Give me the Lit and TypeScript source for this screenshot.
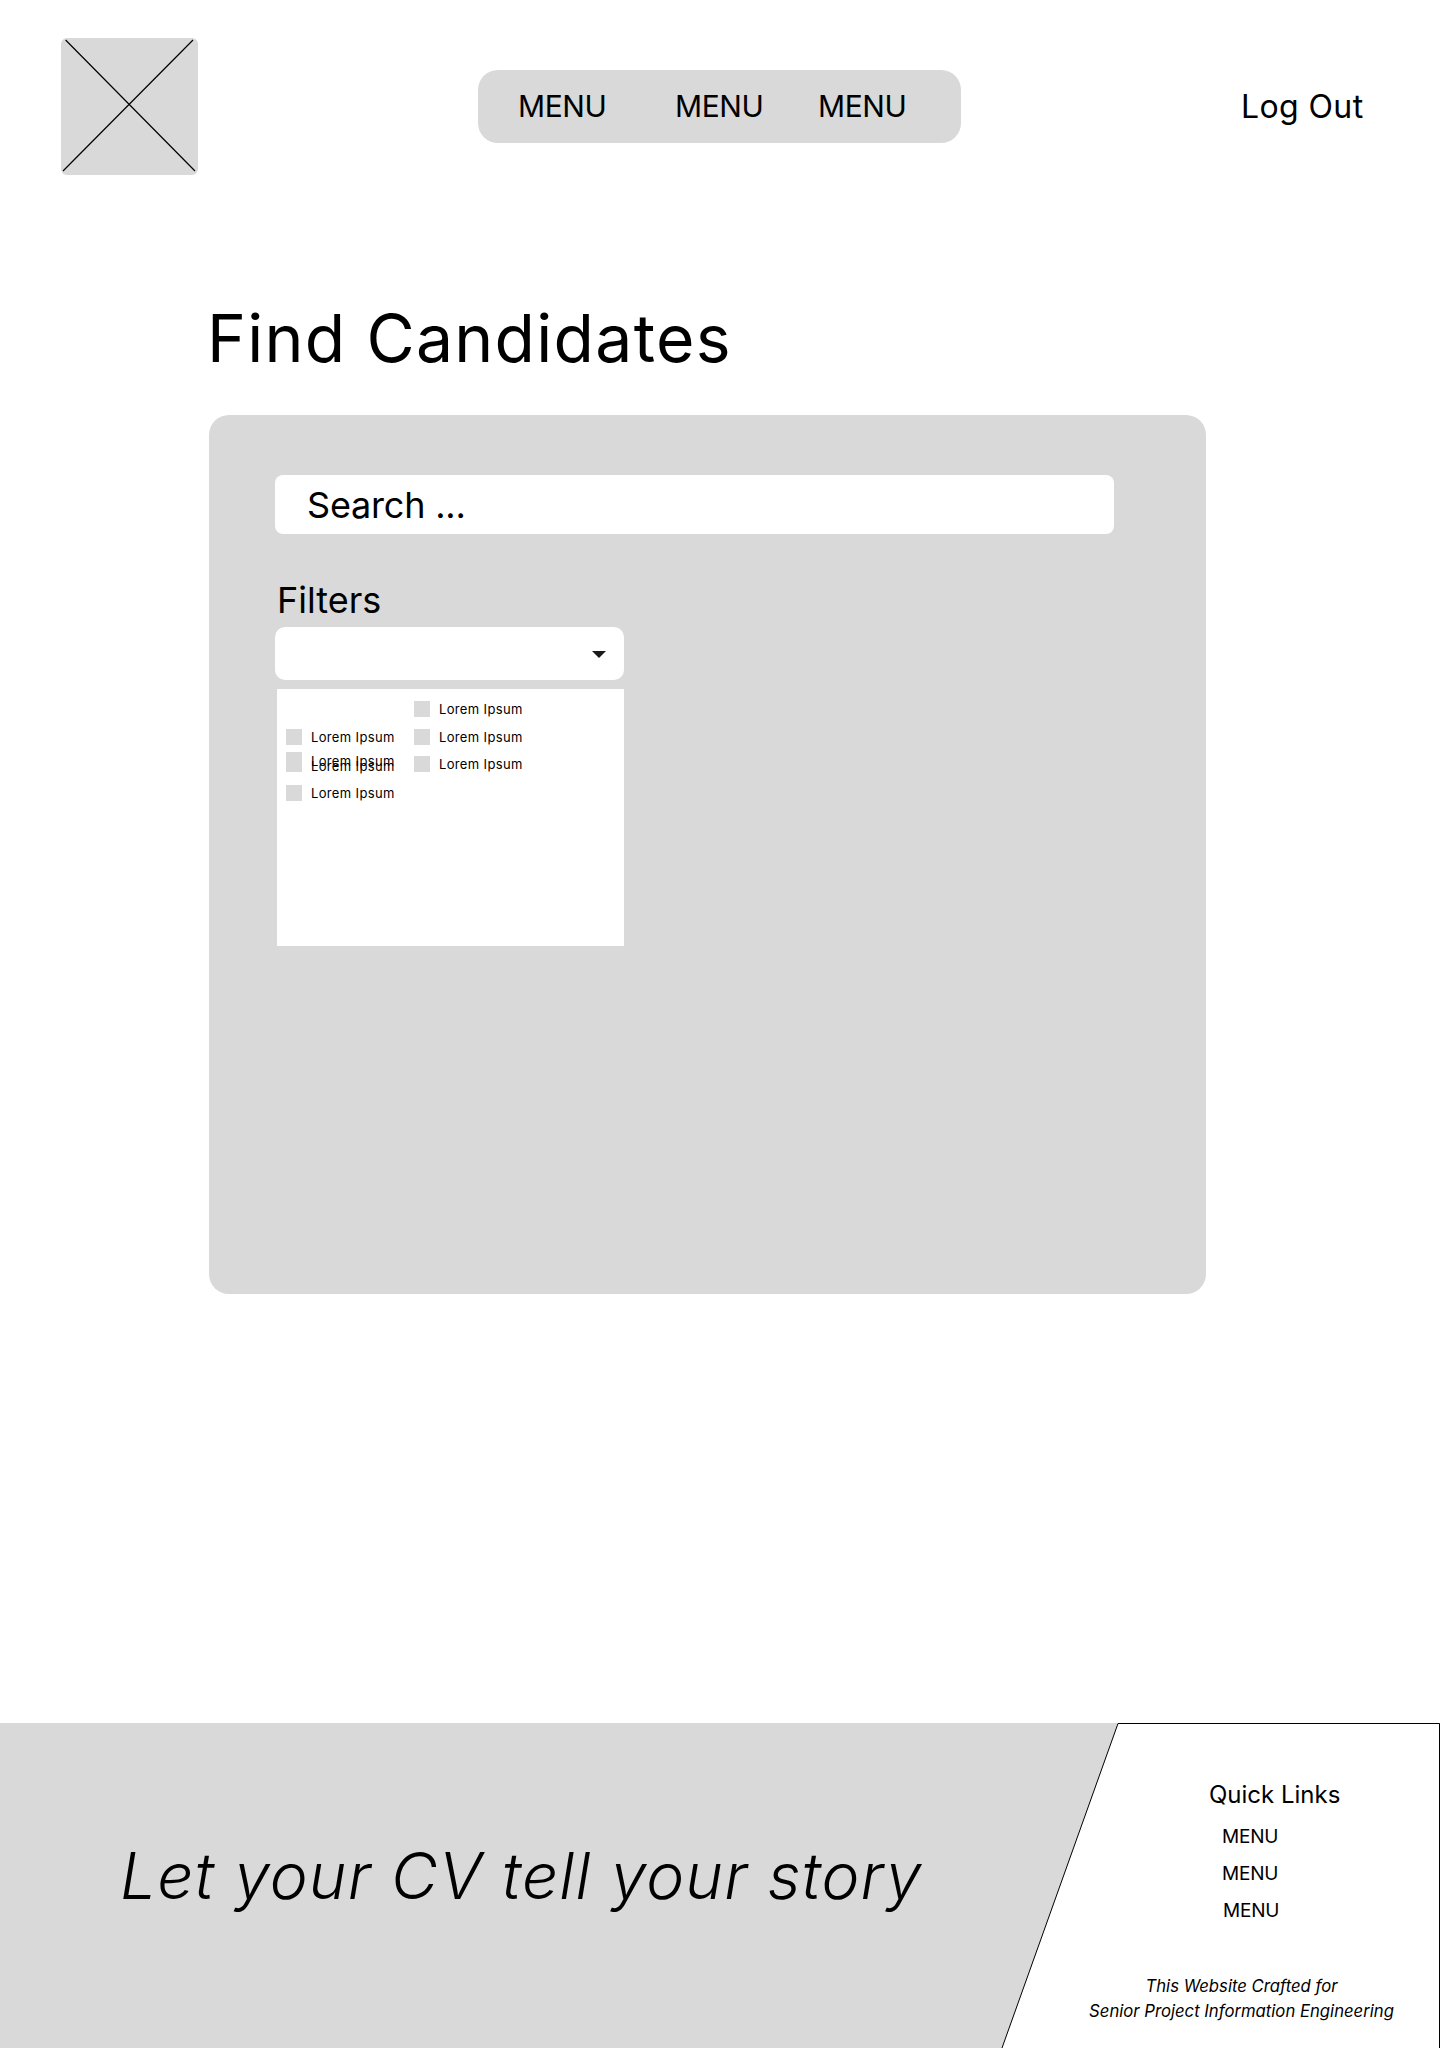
import { LitElement, html, css } from 'lit';
import { customElement } from 'lit/decorators.js';

@customElement('app-root')
export class AppRoot extends LitElement {
  static styles = css`
    :host {
      display: flex;
      flex-direction: column;
      min-height: 2048px;
      background: #fff;
      color: #000;
      font-family: Inter, "Noto Sans", sans-serif;
    }

    .header {
      display: flex;
      align-items: center;
      padding: 38px 0 0 61px;
    }
    .logo {
      display: block;
      width: 137px;
      height: 137px;
      flex: none;
    }
    .nav {
      display: flex;
      align-items: center;
      box-sizing: border-box;
      width: 483px;
      height: 73px;
      margin-left: 280px;
      padding: 0 0 2px 40px;
      background: #d9d9d9;
      border-radius: 20px;
      font-size: 30px;
      letter-spacing: -0.4px;
    }
    .nav span:nth-child(1) { width: 157px; }
    .nav span:nth-child(2) { width: 143px; }
    .logout {
      margin-left: 280px;
      font-size: 32px;
      letter-spacing: 0.4px;
    }

    h1 {
      margin: 123px 0 0 207px;
      font-size: 66px;
      font-weight: 400;
      letter-spacing: 1.3px;
      line-height: 80px;
    }

    .card {
      box-sizing: border-box;
      width: 997px;
      height: 879px;
      margin: 37px 0 0 209px;
      padding: 60px 0 0 66px;
      background: #d9d9d9;
      border-radius: 20px;
    }
    .search {
      box-sizing: border-box;
      width: 839px;
      height: 59px;
      padding-left: 32px;
      background: #fff;
      border-radius: 8px;
      font-size: 36px;
      letter-spacing: -0.2px;
      line-height: 61px;
    }
    .filters-label {
      margin: 40px 0 0 2px;
      font-size: 36px;
      line-height: 53px;
    }
    .select {
      display: flex;
      align-items: center;
      justify-content: flex-end;
      box-sizing: border-box;
      width: 349px;
      height: 53px;
      padding: 2px 18px 0 0;
      background: #fff;
      border-radius: 10px;
    }
    .arrow {
      width: 0;
      height: 0;
      border-left: 7px solid transparent;
      border-right: 7px solid transparent;
      border-top: 7px solid #1a1a1a;
    }
    .panel {
      display: flex;
      box-sizing: border-box;
      width: 347px;
      height: 257px;
      margin: 9px 0 0 2px;
      padding-left: 9px;
      background: #fff;
    }
    .col {
      display: flex;
      flex-direction: column;
      width: 128px;
      padding-top: 40px;
    }
    .col.right { padding-top: 12px; }
    .row {
      display: flex;
      gap: 9px;
      font-size: 13px;
      letter-spacing: 0.35px;
      line-height: 16px;
    }
    .box {
      width: 16px;
      height: 16px;
      flex: none;
      background: #d9d9d9;
    }
    .row.stacked { height: 20px; margin-top: 7px; }
    .row.stacked .box { height: 20px; }
    .stack { display: grid; }
    .stack span { grid-area: 1 / 1; }
    .stack span:nth-child(1) { margin-top: 1px; }
    .stack span:nth-child(2) { margin-top: 6px; }
    .gap-13 { margin-top: 13px; }
    .gap-12 { margin-top: 12px; }
    .gap-11 { margin-top: 11px; }

    .footer {
      position: relative;
      display: flex;
      height: 325px;
      margin-top: auto;
      background: #d9d9d9;
    }
    .shape {
      position: absolute;
      inset: 0;
      width: 100%;
      height: 100%;
    }
    .tagline {
      position: relative;
      box-sizing: border-box;
      width: 1089px;
      padding: 113px 0 0 120px;
      font-size: 64px;
      font-style: italic;
      font-weight: 300;
      letter-spacing: 1.15px;
      line-height: 80px;
      white-space: nowrap;
    }
    .links {
      position: relative;
      display: flex;
      flex-direction: column;
      box-sizing: border-box;
      width: 351px;
      padding-top: 56px;
    }
    .quick {
      margin-left: 120px;
      font-size: 24px;
      line-height: 32px;
    }
    .links a {
      margin: 5px 0 0 133px;
      font-size: 19px;
      letter-spacing: -0.2px;
      line-height: 32px;
    }
    .links a:first-of-type { margin-top: 10px; }
    .links a:last-of-type { margin-left: 134px; }
    .credit {
      width: 305px;
      margin-top: 47px;
      font-size: 16.7px;
      font-style: italic;
      line-height: 25px;
      text-align: center;
      white-space: nowrap;
    }
  `;

  render() {
    return html`
      <div class="header">
        <svg class="logo" viewBox="0 0 137 137">
          <rect width="137" height="137" rx="6" fill="#d9d9d9"></rect>
          <path d="M4.6 2 134 133M132 2 2 133" stroke="#000" stroke-width="1.2" fill="none"></path>
        </svg>
        <div class="nav"><span>MENU</span><span>MENU</span><span>MENU</span></div>
        <div class="logout">Log Out</div>
      </div>

      <h1>Find Candidates</h1>

      <div class="card">
        <div class="search">Search ...</div>
        <div class="filters-label">Filters</div>
        <div class="select"><div class="arrow"></div></div>
        <div class="panel">
          <div class="col">
            <div class="row"><div class="box"></div><span>Lorem Ipsum</span></div>
            <div class="row stacked">
              <div class="box"></div>
              <div class="stack"><span>Lorem Ipsum</span><span>Lorem Ipsum</span></div>
            </div>
            <div class="row gap-13"><div class="box"></div><span>Lorem Ipsum</span></div>
          </div>
          <div class="col right">
            <div class="row"><div class="box"></div><span>Lorem Ipsum</span></div>
            <div class="row gap-12"><div class="box"></div><span>Lorem Ipsum</span></div>
            <div class="row gap-11"><div class="box"></div><span>Lorem Ipsum</span></div>
          </div>
        </div>
      </div>

      <div class="footer">
        <svg class="shape" viewBox="0 0 1440 325">
          <path d="M1002 325 1118 .5H1439.5V325" fill="#fff" stroke="#000" stroke-width="1"></path>
        </svg>
        <div class="tagline">Let your CV tell your story</div>
        <div class="links">
          <div class="quick">Quick Links</div>
          <a>MENU</a>
          <a>MENU</a>
          <a>MENU</a>
          <div class="credit">This Website Crafted for<br />Senior Project Information Engineering</div>
        </div>
      </div>
    `;
  }
}
